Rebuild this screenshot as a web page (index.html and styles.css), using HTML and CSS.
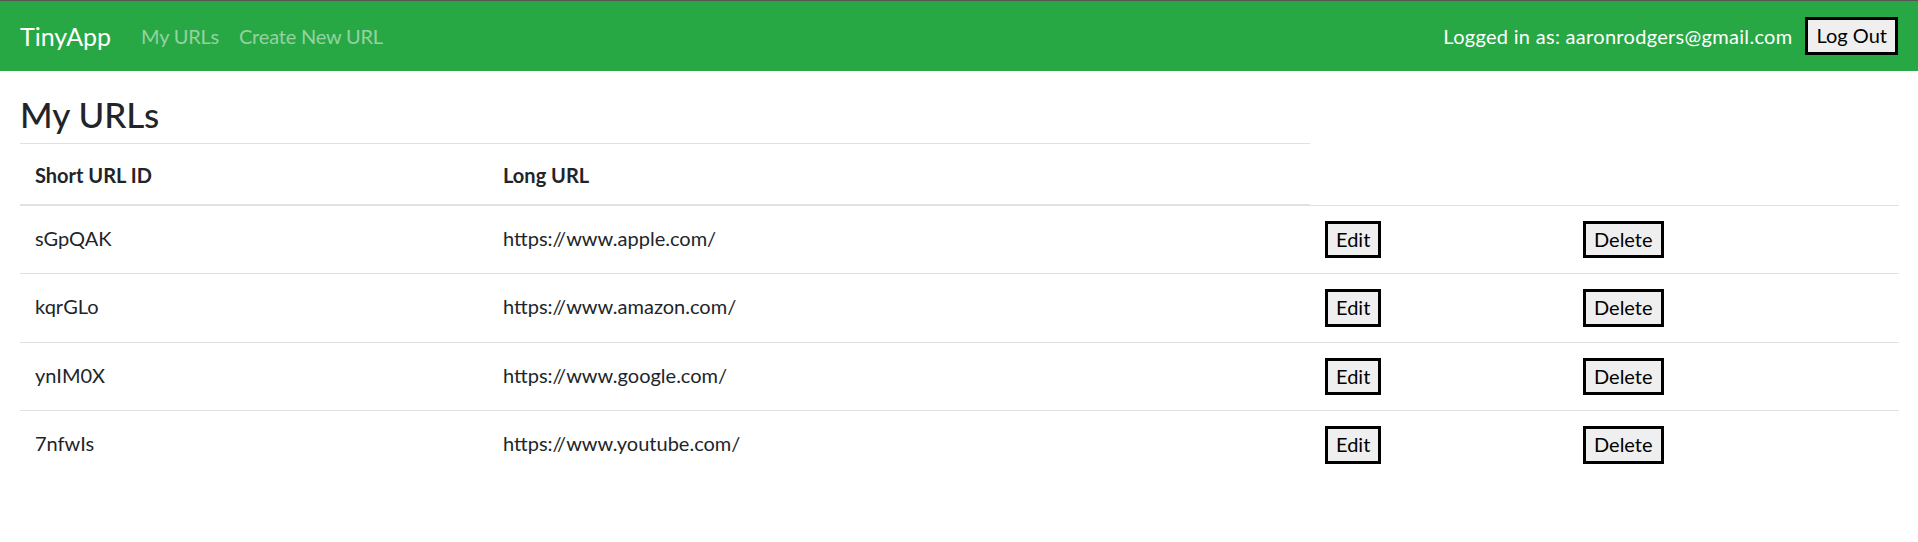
FILE: index.html
```html
<!DOCTYPE html>
<html lang="en">
<head>
<meta charset="utf-8">
<title>TinyApp</title>
<link rel="stylesheet" href="styles.css">
</head>
<body>
<nav class="navbar">
  <a class="brand" href="#">TinyApp</a>
  <div class="nav-links">
    <a class="nav-link" href="#">My URLs</a>
    <a class="nav-link" href="#">Create New URL</a>
  </div>
  <div class="nav-user">
    <span class="user-text">Logged in as: aaronrodgers@gmail.com</span>
    <button class="btn" type="button">Log Out</button>
  </div>
</nav>
<main class="container">
  <h3 class="title">My URLs</h3>
  <table class="table">
    <colgroup>
      <col class="col-id">
      <col class="col-url">
      <col class="col-edit">
      <col class="col-del">
    </colgroup>
    <thead>
      <tr>
        <th>Short URL ID</th>
        <th>Long URL</th>
      </tr>
    </thead>
    <tbody>
      <tr>
        <td>sGpQAK</td>
        <td>https://www.apple.com/</td>
        <td><button class="btn" type="button">Edit</button></td>
        <td><button class="btn" type="button">Delete</button></td>
      </tr>
      <tr>
        <td>kqrGLo</td>
        <td>https://www.amazon.com/</td>
        <td><button class="btn" type="button">Edit</button></td>
        <td><button class="btn" type="button">Delete</button></td>
      </tr>
      <tr>
        <td>ynIM0X</td>
        <td>https://www.google.com/</td>
        <td><button class="btn" type="button">Edit</button></td>
        <td><button class="btn" type="button">Delete</button></td>
      </tr>
      <tr>
        <td>7nfwIs</td>
        <td>https://www.youtube.com/</td>
        <td><button class="btn" type="button">Edit</button></td>
        <td><button class="btn" type="button">Delete</button></td>
      </tr>
    </tbody>
  </table>
</main>
</body>
</html>
```
FILE: styles.css
```css
* { box-sizing: border-box; }

html, body {
  margin: 0;
  padding: 0;
  background: #fff;
}

body {
  font-family: Lato, "Open Sans", "Liberation Sans", sans-serif;
  font-size: 20px;
  line-height: 1.5;
  color: #212529;
}

.navbar {
  display: flex;
  align-items: center;
  height: 71px;
  padding: 0 20px;
  background: #28a745;
  border-top: 1px solid #555;
}

.brand {
  font-size: 25px;
  line-height: 37px;
  color: #fff;
  text-decoration: none;
  margin-right: 20px;
}

.nav-links {
  display: flex;
  flex: 1;
}

.nav-link {
  padding: 8px 10px;
  line-height: 30px;
  color: rgba(255, 255, 255, 0.5);
  text-decoration: none;
  letter-spacing: -0.2px;
}

.nav-user {
  display: flex;
  align-items: center;
  gap: 13px;
  color: #fff;
}

.user-text {
  letter-spacing: 0.3px;
}

.btn {
  font-family: inherit;
  font-size: 20px;
  line-height: 29.5px;
  padding: 1px 8px;
  margin: 0;
  border: 3px solid #000;
  border-radius: 0;
  background: #efefef;
  color: #000;
}

.container {
  padding: 0 19px 0 20px;
}

.title {
  margin: 22px 0 8px;
  font-size: 35px;
  font-weight: 500;
  line-height: 42px;
}

.table {
  width: 100%;
  border-collapse: collapse;
  table-layout: fixed;
  color: #212529;
}

.col-id { width: 468px; }
.col-url { width: 822px; }
.col-edit { width: 258px; }
.col-del { width: 331px; }

.table th,
.table td {
  padding: 15px;
  text-align: left;
  vertical-align: top;
  border-top: 1px solid #dee2e6;
}

.table td {
  line-height: 34px;
}

.table th {
  font-weight: 700;
  padding: 16px 15px 14px;
}

.table thead th {
  vertical-align: bottom;
  border-bottom: 2px solid #dee2e6;
}
```
